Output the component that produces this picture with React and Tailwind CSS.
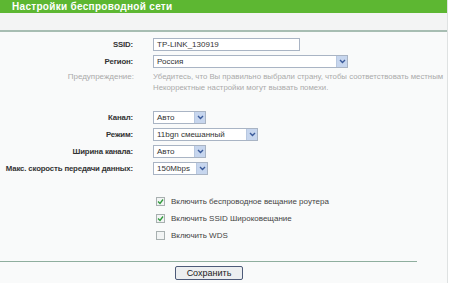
import React from "react";

function Chevron() {
  return (
    <span className="flex items-center justify-center w-[11px] h-full bg-[#c7d6ee] border-l border-[#b8c8e0]">
      <svg width="7" height="5" viewBox="0 0 7 5">
        <path d="M1 1 L3.5 3.5 L6 1" fill="none" stroke="#3a5a9a" strokeWidth="1.4" />
      </svg>
    </span>
  );
}

function Select({ value, width }) {
  return (
    <div
      className={`flex items-stretch h-[13px] bg-white border border-[#a9b4c4] ${width}`}
    >
      <span className="flex-1 pl-[3px] text-[8px] leading-[11px] text-[#333] whitespace-nowrap">
        {value}
      </span>
      <Chevron />
    </div>
  );
}

function Row({ label, children }) {
  return (
    <div className="flex items-center h-[17px]">
      <div className="w-[134px] flex justify-end text-[7.8px] tracking-[-0.15px] font-bold text-[#333] pr-[1px] whitespace-nowrap">
        {label}
      </div>
      <div className="ml-[19px] flex items-center">{children}</div>
    </div>
  );
}

function Check({ checked, label }) {
  return (
    <div className="flex items-center h-[17px] pl-[156px]">
      <span className="w-[9px] h-[9px] bg-[#f2f4f4] border border-[#a8b0b0] flex items-center justify-center">
        {checked && (
          <svg width="7" height="7" viewBox="0 0 7 7">
            <path d="M1 3.5 L3 5.5 L6 1.5" fill="none" stroke="#2f9a3a" strokeWidth="1.3" />
          </svg>
        )}
      </span>
      <span className="ml-[6px] text-[8px] text-[#444]">{label}</span>
    </div>
  );
}

export default function App() {
  return (
    <div
      className="w-[450px] h-[283px] bg-white overflow-hidden"
      style={{ fontFamily: '"Liberation Sans", Arial, sans-serif' }}
    >
      <div className="w-[448px] h-[283px] bg-[#f9fafa] border-r border-[#dfe2e2]">
        {/* Header */}
        <div className="h-[13px] bg-[#5db732] flex items-center pl-[12px]">
          <span className="text-white font-bold text-[10px] tracking-[0.3px] leading-none">
            Настройки беспроводной сети
          </span>
        </div>
        <div className="h-[17px] bg-[#f3f4f4]" />
        <div className="h-[2px] bg-[#a7bdb2]" />

        <div className="pt-[4px]">
          <Row label="SSID:">
            <div className="w-[147px] h-[13px] bg-white border border-[#a9b4c4] pl-[3px] text-[8px] leading-[11px] text-[#333]">
              TP-LINK_130919
            </div>
          </Row>
          <Row label="Регион:">
            <Select value="Россия" width="w-[195px]" />
          </Row>

          <div className="flex pt-[1px]">
            <div className="w-[134px] text-right text-[8px] text-[#aaa] leading-[11px]">
              Предупреждение:
            </div>
            <div className="ml-[19px] text-[7.8px] text-[#aaa] leading-[11px] whitespace-nowrap">
              <div>Убедитесь, что Вы правильно выбрали страну, чтобы соответствовать местным</div>
              <div>Некорректные настройки могут вызвать помехи.</div>
            </div>
          </div>

          <div className="pt-[16px]">
            <Row label="Канал:">
              <Select value="Авто" width="w-[53px]" />
            </Row>
            <Row label="Режим:">
              <Select value="11bgn смешанный" width="w-[105px]" />
            </Row>
            <Row label="Ширина канала:">
              <Select value="Авто" width="w-[53px]" />
            </Row>
            <Row label="Макс. скорость передачи данных:">
              <Select value="150Mbps" width="w-[55px]" />
            </Row>
          </div>

          <div className="pt-[16px]">
            <Check checked label="Включить беспроводное вещание роутера" />
            <Check checked label="Включить SSID Широковещание" />
            <Check label="Включить WDS" />
          </div>
        </div>

        <div className="mt-[17px] w-[417px] h-[1px] bg-[#8fae9e]" />

        <div className="flex pt-[4px] pl-[175px]">
          <button className="w-[68px] h-[14px] border border-[#4d5a78] rounded-[2px] bg-[#eceef0] text-[9px] leading-[12px] text-[#222]">
            Сохранить
          </button>
        </div>
      </div>
    </div>
  );
}
